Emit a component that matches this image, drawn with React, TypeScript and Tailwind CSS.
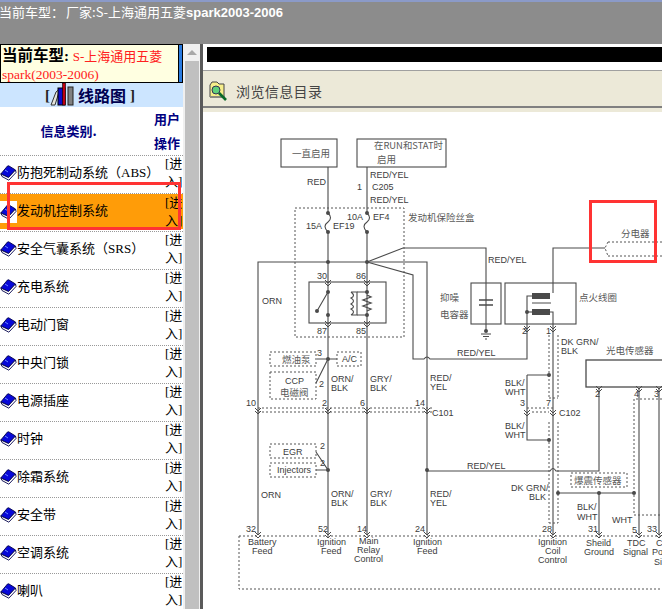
const rows = [
  "防抱死制动系统（ABS）",
  "发动机控制系统",
  "安全气囊系统（SRS）",
  "充电系统",
  "电动门窗",
  "中央门锁",
  "电源插座",
  "时钟",
  "除霜系统",
  "安全带",
  "空调系统",
  "喇叭",
];

function BookIcon() {
  return (
    <svg width="17" height="16" viewBox="0 0 17 16" className="shrink-0">
      <path d="M0.8 9 L7.5 1 Q8 0.5 9 1 L15.5 5 L8.5 12.5 Z" fill="#0808d8" stroke="#000048" strokeWidth="0.9" />
      <path d="M0.8 9 L2 11.5 L8.8 15.2 L16 7.5 L15.5 5 L8.5 12.5 Z" fill="#ffffff" stroke="#000048" strokeWidth="0.9" />
      <path d="M5 5 L8 7" stroke="#6f8cff" strokeWidth="1" />
    </svg>
  );
}

function WiringIcon() {
  return (
    <svg width="24" height="24" viewBox="0 0 24 24" className="shrink-0">
      <path d="M1 22 L6 9 Q8 6 9 9 L5 22 Z" fill="#e4e4dc" stroke="#333" />
      <rect x="8" y="5" width="7" height="17" fill="#0c0cc8" stroke="#000" />
      <rect x="12.5" y="0" width="3" height="22" fill="#c00010" stroke="#000" strokeWidth="0.6" />
      <rect x="18" y="4" width="5" height="18" fill="#808080" stroke="#222" />
    </svg>
  );
}

function FolderIcon() {
  return (
    <svg width="20" height="21" viewBox="0 0 20 21" className="shrink-0">
      <path d="M1 4 L3 1 L8 1 L10 3 L15 3 L15 16 L1 16 Z" fill="#f6ee8a" stroke="#444" />
      <rect x="1" y="15" width="15" height="2" fill="#8a8a80" />
      <circle cx="7" cy="9" r="4" fill="#5fd07a" stroke="#335" />
      <path d="M10 12 L17 19" stroke="#0a6a2a" strokeWidth="2.6" />
    </svg>
  );
}

// coordinates are page pixels, the viewBox starts where the pane starts
function Diagram() {
  const wire = "#4a4a4a";
  const lbl = { fontFamily: "Liberation Sans, sans-serif", fontSize: 9, fill: "#3c3c3c" };
  const cjk = { fontFamily: "Noto Sans CJK SC, sans-serif", fontSize: 9.5, fill: "#5a5a5a" };
  const pins = [
    [328, 282], [367, 282], [328, 323], [367, 323], [258, 410], [328, 410], [367, 410], [427, 410],
    [527, 412], [553, 412], [527, 328], [553, 328], [258, 534], [328, 534], [367, 534], [427, 534],
    [553, 534], [599, 534], [639, 534], [659, 534], [599, 388], [639, 388], [659, 388],
  ];
  const dots = [
    [328, 213], [367, 213], [328, 232], [367, 232], [328, 262], [367, 262], [328, 292], [367, 292],
    [328, 315], [367, 315], [317, 311], [328, 359], [328, 470], [427, 470], [527, 312], [549, 375],
    [549, 440], [558, 493], [599, 493], [634, 493], [486, 331],
  ];
  return (
    <svg width="459" height="497" viewBox="203 112 459 497" className="block">
      <g fill="none" stroke={wire} strokeWidth="1.1">
        <rect x="281" y="139" width="56" height="28" />
        <rect x="357" y="139" width="89" height="28" />
        {/* fuses */}
        <path d="M328 167 V213 q5 5 0 9 q-6 4 0 10 V534" />
        <path d="M367 167 V213 q5 5 0 9 q-6 4 0 10 V534" />
        {/* feed lines */}
        <path d="M258 534 V262 H427 V534" />
        <path d="M367 262 L403 248 H486 V331" />
        <path d="M367 262 L413 275 V359 H424 q3 -4 6 0 H527 V296 H532" />
        <path d="M527 312 H532" />
        {/* relay */}
        <rect x="309" y="282" width="77" height="41" />
        <path d="M328 292 L317 311 M367 292 H357 M367 315 H357" />
        <path d="M351 292 H357 V315 H351 M351 292 q5 4 0 6 q5 3 0 6 q5 3 0 5 q5 3 0 6" />
        <path d="M367 295 l4 2 l-8 3 l8 3 l-8 3 l8 3 l-4 2" strokeWidth="1.3" />
        {/* capacitor and coil */}
        <rect x="471" y="283" width="30" height="41" />
        <rect x="505" y="283" width="71" height="41" />
        <path d="M479 300 H493 M479 305 H493" strokeWidth="1.5" />
        <path d="M481 334 H491 M483 336.5 H489 M485 339 H487" />
        <path d="M532 303 H551" strokeWidth="1" />
        <path d="M605 248 H553 V293 M550 312 H553 V534" />
        <path d="M527 375 H549 M527 375 V440 H549" />
        <path d="M427 471 H550 q3 -5 6 0 H599 V388" />
        <path d="M558 493 H634 M599 493 V534 M639 388 V534 M659 388 V534" />
        {/* connector tails on the left */}
        <path d="M317 359 H337 M328 359 L316 383" />
        <path d="M316 470 H328 L316 452" />
        <rect x="586" y="360" width="90" height="27" strokeWidth="1.3" />
      </g>
      <g fill="none" stroke="#555" strokeWidth="1" strokeDasharray="2 2">
        <rect x="295" y="208" width="109" height="129" />
        <rect x="270" y="352" width="46" height="14" />
        <rect x="270" y="372" width="46" height="27" />
        <rect x="337" y="352" width="24" height="14" />
        <rect x="270" y="444" width="46" height="14" />
        <rect x="270" y="463" width="46" height="14" />
        <rect x="239" y="536" width="440" height="53" />
        <path d="M258 408 H432 M258 412 H432 M527 408 H553 M532 412 H549" />
        <path d="M608 242 H662 M608 256 H662 M608 242 L605 248 L608 256" />
        <rect x="571" y="473" width="56" height="14" />
        <path d="M549 335 V398 M558 335 V398 M549 398 H558 M549 422 V523 M558 422 V523 M549 523 H558" />
        <path d="M662 399 H634 V515 H662" />
      </g>
      <g fill="none" stroke={wire} strokeWidth="1">
        {pins.map(([x, y]) => (
          <path key={`${x}-${y}`} d={`M${x - 3} ${y - 2} L${x} ${y + 1} L${x + 3} ${y - 2} M${x - 3} ${y + 1} L${x} ${y + 4} L${x + 3} ${y + 1}`} />
        ))}
      </g>
      <g fill={wire}>
        {dots.map(([x, y]) => (
          <circle key={`${x}-${y}`} cx={x} cy={y} r="2" />
        ))}
        <rect x="532" y="293" width="18" height="6" />
        <rect x="532" y="309" width="18" height="6" />
      </g>
      <g style={cjk}>
        <text x="292" y="157">一直启用</text>
        <text x="374" y="149" textLength="69" lengthAdjust="spacingAndGlyphs">在RUN和STAT时</text>
        <text x="377" y="163">启用</text>
        <text x="408" y="221">发动机保险丝盒</text>
        <text x="440" y="301">抑噪</text>
        <text x="440" y="318">电容器</text>
        <text x="579" y="301">点火线圈</text>
        <text x="606" y="354">光电传感器</text>
        <text x="621" y="237">分电器</text>
        <text x="282" y="363">燃油泵</text>
        <text x="280" y="396">电磁阀</text>
        <text x="574" y="484">爆震传感器</text>
      </g>
      <g style={lbl}>
        <text x="307" y="185">RED</text>
        <text x="370" y="178">RED/YEL</text>
        <text x="357" y="190">1</text>
        <text x="372" y="190">C205</text>
        <text x="370" y="203">RED/YEL</text>
        <text x="306" y="229">15A</text>
        <text x="333" y="229">EF19</text>
        <text x="347" y="220">10A</text>
        <text x="373" y="220">EF4</text>
        <text x="317" y="279">30</text>
        <text x="356" y="279">86</text>
        <text x="317" y="334">87</text>
        <text x="356" y="334">85</text>
        <text x="262" y="304">ORN</text>
        <text x="488" y="263">RED/YEL</text>
        <text x="457" y="356">RED/YEL</text>
        <text x="561" y="345">DK GRN/</text>
        <text x="561" y="354">BLK</text>
        <text x="522" y="334">2</text>
        <text x="546" y="334">1</text>
        <text x="317" y="356">3</text>
        <text x="319" y="387">2</text>
        <text x="342" y="362">A/C</text>
        <text x="285" y="384">CCP</text>
        <text x="331" y="382">ORN/</text>
        <text x="331" y="391">BLK</text>
        <text x="370" y="382">GRY/</text>
        <text x="370" y="391">BLK</text>
        <text x="430" y="381">RED/</text>
        <text x="430" y="390">YEL</text>
        <text x="246" y="406">10</text>
        <text x="322" y="406">2</text>
        <text x="360" y="406">6</text>
        <text x="415" y="406">14</text>
        <text x="432" y="416">C101</text>
        <text x="505" y="386">BLK/</text>
        <text x="505" y="395">WHT</text>
        <text x="520" y="406">3</text>
        <text x="546" y="406">7</text>
        <text x="559" y="416">C102</text>
        <text x="505" y="429">BLK/</text>
        <text x="505" y="438">WHT</text>
        <text x="467" y="469">RED/YEL</text>
        <text x="511" y="491">DK GRN/</text>
        <text x="529" y="500">BLK</text>
        <text x="430" y="497">RED/</text>
        <text x="430" y="506">YEL</text>
        <text x="577" y="510">BLK/</text>
        <text x="577" y="520">WHT</text>
        <text x="612" y="523">WHT</text>
        <text x="595" y="397">2</text>
        <text x="634" y="397">4</text>
        <text x="654" y="397">3</text>
        <text x="283" y="455">EGR</text>
        <text x="277" y="473">Injectors</text>
        <text x="320" y="449">2</text>
        <text x="320" y="466">2</text>
        <text x="261" y="498">ORN</text>
        <text x="331" y="497">ORN/</text>
        <text x="331" y="506">BLK</text>
        <text x="370" y="497">GRY/</text>
        <text x="370" y="506">BLK</text>
        <text x="246" y="532">32</text>
        <text x="318" y="532">52</text>
        <text x="357" y="532">14</text>
        <text x="415" y="532">24</text>
        <text x="542" y="532">28</text>
        <text x="588" y="532">31</text>
        <text x="632" y="533">5</text>
        <text x="647" y="532">33</text>
        <text x="248" y="545">Battery</text>
        <text x="252" y="554">Feed</text>
        <text x="317" y="545">Ignition</text>
        <text x="321" y="554">Feed</text>
        <text x="359" y="544">Main</text>
        <text x="357" y="553">Relay</text>
        <text x="354" y="562">Control</text>
        <text x="413" y="545">Ignition</text>
        <text x="417" y="554">Feed</text>
        <text x="538" y="545">Ignition</text>
        <text x="545" y="554">Coil</text>
        <text x="538" y="563">Control</text>
        <text x="586" y="546">Sheild</text>
        <text x="584" y="555">Ground</text>
        <text x="627" y="546">TDC</text>
        <text x="623" y="555">Signal</text>
        <text x="656" y="546">C</text>
        <text x="652" y="555">Po</text>
        <text x="654" y="565">Si</text>
      </g>
    </svg>
  );
}

export default function App() {
  return (
    <div className="w-[662px] h-[609px] overflow-hidden bg-[#8c8c8c] flex flex-col font-['Liberation_Sans',sans-serif] relative">
      {/* title bar */}
      <div className="h-[44px] shrink-0 bg-[#8c8c8c] border-t-[2px] border-[#8b9ac8] pl-0 -ml-[1px]">
        <p className="text-[13px] leading-[20px] text-white whitespace-nowrap font-['Noto_Sans_CJK_SC',sans-serif]">
          当前车型：<span className="ml-[2px]">厂家:S-上海通用五菱</span><span className="font-bold font-['Liberation_Sans',sans-serif]">spark2003-2006</span>
        </p>
      </div>

      <div className="flex flex-1 min-h-0">
        {/* left nav */}
        <div className="w-[183px] shrink-0 bg-white flex flex-col">
          <div className="h-[39px] shrink-0 bg-[#ffffe1] border border-black relative pl-[1px]">
            <div className="leading-[21px] whitespace-nowrap font-['Liberation_Serif','Noto_Sans_CJK_SC',serif]">
              <span className="text-[15.5px] font-bold text-black">当前车型</span>
              <span className="text-[15px] font-bold text-black">: </span>
              <span className="text-[13px] text-[#ff2020]">S-上海通用五菱</span>
            </div>
            <div className="text-[13.5px] leading-[15px] text-[#ff2020] font-['Liberation_Serif',serif]">spark(2003-2006)</div>
            <div className="absolute right-0 top-0 bottom-0 w-[3px] border-l border-black bg-[#2a7be0] box-content" />
          </div>

          <div className="h-[24px] shrink-0 bg-[#cce5ff] flex items-center pl-[45px] text-[#000050] font-bold">
            <span className="font-['Liberation_Serif',serif] text-[15px] text-[#222] w-[5px]">[</span>
            <WiringIcon />
            <span className="text-[16px] ml-[4px] font-['Noto_Sans_CJK_SC',sans-serif]">线路图</span>
            <span className="font-['Liberation_Serif',serif] text-[15px] text-[#222] ml-[4px]">]</span>
          </div>

          <div className="h-[48px] shrink-0 flex text-[13px] font-bold text-[#000080] font-['Noto_Sans_CJK_SC',sans-serif]">
            <div className="w-[153px] flex items-center justify-center pr-[16px]">信息类别.</div>
            <div className="w-[30px] flex flex-col justify-center leading-[24px] pl-[1px]">
              <span>用户</span>
              <span>操作</span>
            </div>
          </div>

          {rows.map((name) => {
            const active = name === "发动机控制系统";
            return (
              <div
                key={name}
                className={`h-[38px] shrink-0 flex items-center border-t border-dotted border-[#999] ${active ? "bg-[#ff9c08] pb-[2px] bg-clip-content" : "bg-white"}`}
              >
                <div className={`w-[17px] h-[22px] shrink-0 bg-white flex items-center ${active ? "" : "-mt-[3px]"}`}>
                  <BookIcon />
                </div>
                <div className={`flex-1 min-w-0 text-[13px] whitespace-nowrap text-black font-['Liberation_Serif','Noto_Sans_CJK_SC',serif] ${active ? "pb-[1px]" : "pb-[3px]"}`}>
                  {name}
                </div>
                <div className={`w-[18px] shrink-0 text-[13px] leading-[18px] text-black font-['Liberation_Serif','Noto_Sans_CJK_SC',serif] ${active ? "" : "pb-[3px]"}`}>
                  [进入]
                </div>
              </div>
            );
          })}
        </div>

        {/* nav scrollbar */}
        <div className="w-[17px] shrink-0 bg-[#f0f0f0] flex flex-col items-center">
          <div className="h-[17px] w-full flex items-center justify-center">
            <div className="border-x-[5px] border-x-transparent border-b-[5px] border-b-[#a8a8a8]" />
          </div>
          <div className="flex-1 w-[14px] bg-[#c0c0c0]" />
        </div>
        <div className="w-[3px] shrink-0 bg-[#5a5a5a]" />

        {/* right pane */}
        <div className="flex-1 min-w-0 flex flex-col bg-white">
          <div className="h-[26px] shrink-0 pt-[3px] pl-[4px]">
            <div className="h-[15px] bg-black" />
          </div>
          <div className="h-[38px] shrink-0 bg-[#ece9d8] border-t border-b-[2px] border-t-[#a0a0a0] border-b-[#808080] flex items-center gap-[7px] pl-[6px] pt-[6px]">
            <FolderIcon />
            <span className="text-[14px] tracking-[0.4px] text-[#444] font-['Noto_Sans_CJK_SC',sans-serif]">浏览信息目录</span>
          </div>
          <div className="h-[4px] shrink-0 bg-[#ece9d8]" />
          <Diagram />
        </div>
      </div>

      {/* red markup boxes drawn over the screenshot */}
      <div className="absolute left-[7px] top-[182px] w-[174px] h-[48px] border-[3px] border-[#ff3333]" />
      <div className="absolute left-[589px] top-[200px] w-[68px] h-[63px] border-[3px] border-[#ff3333]" />
    </div>
  );
}
